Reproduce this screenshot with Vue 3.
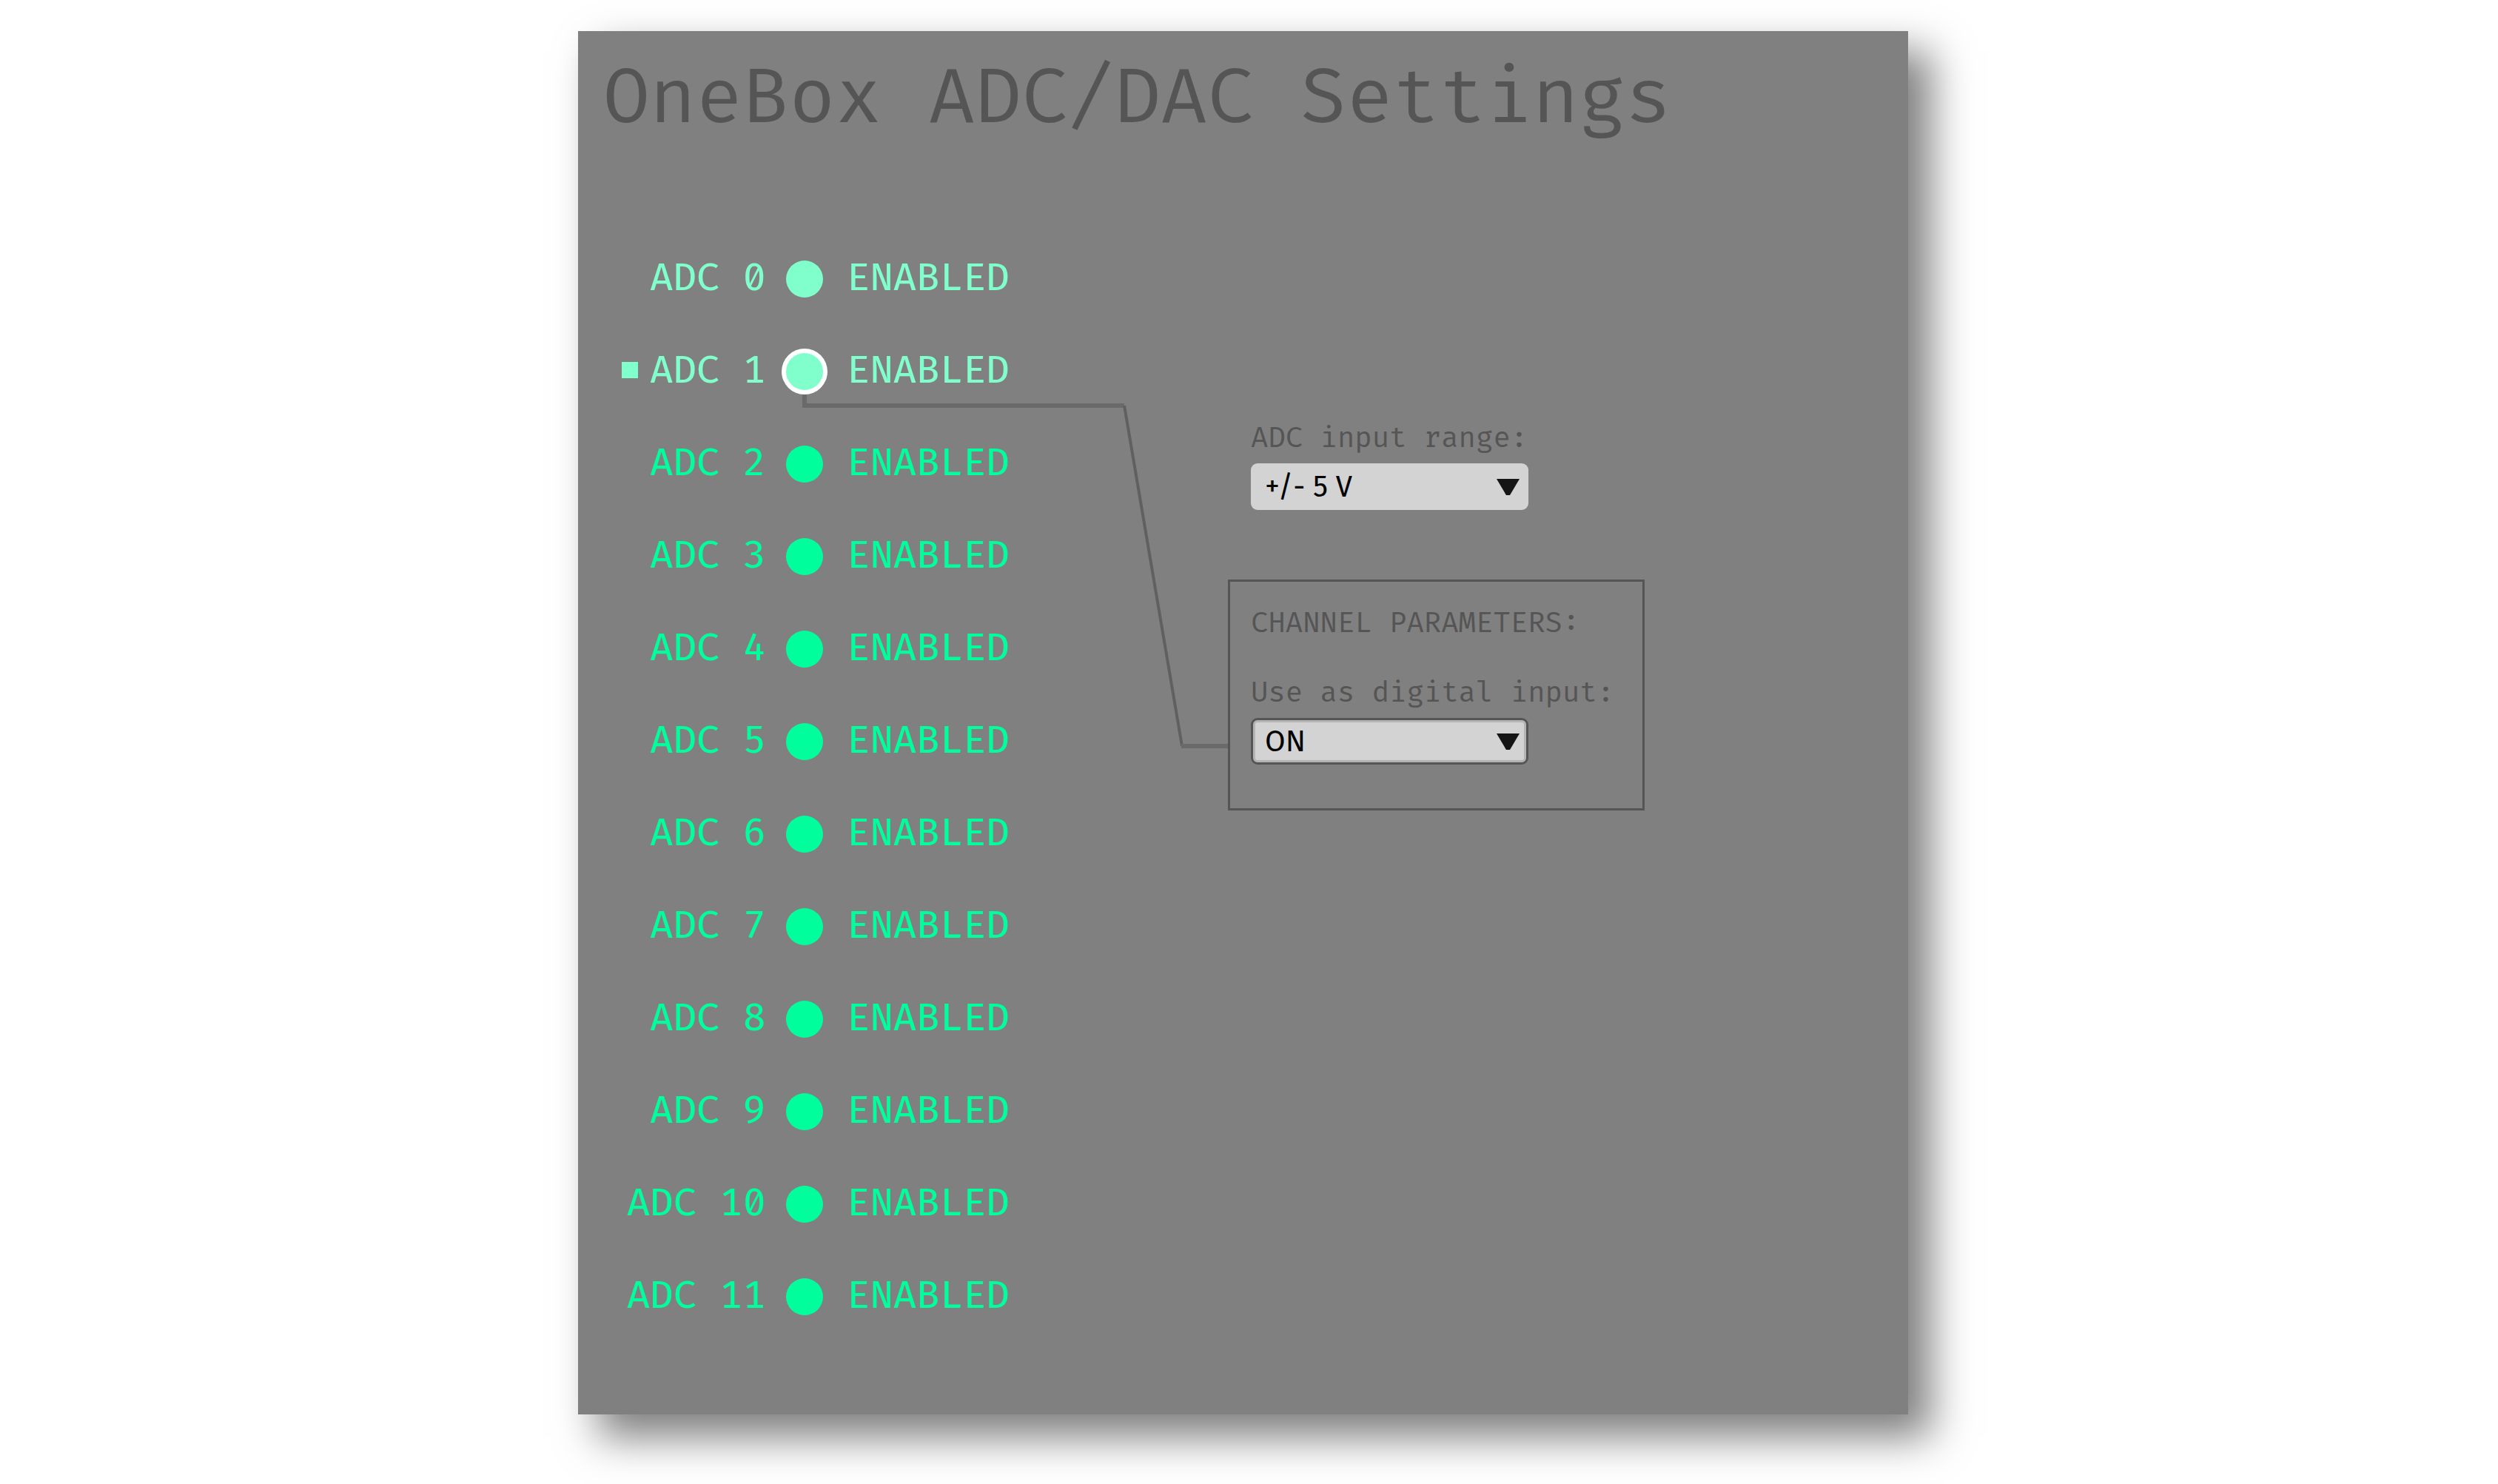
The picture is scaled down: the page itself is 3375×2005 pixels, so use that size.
<script setup>
import { reactive, ref, computed } from 'vue'

const channels = reactive(
  Array.from({ length: 12 }, (_, id) => ({
    id,
    status: 'ENABLED',
    digital: id < 2 ? 'ON' : 'OFF',
  })),
)

const selectedId = ref(1)
const inputRange = ref('+/- 5 V')
const selected = computed(() => channels[selectedId.value])

const ROW = 125
const anchorY = computed(() => selectedId.value * ROW + 94)
const lineTop = computed(() => selectedId.value * ROW + 109)
</script>

<template>
  <div class="page">
    <main class="panel">
      <h1>OneBox ADC/DAC Settings</h1>

      <div class="body">
        <svg class="connector" width="878" height="1500" aria-hidden="true">
          <path class="flat" :d="`M306 ${anchorY}V${lineTop}H738`" />
          <path class="slant" :d="`M738 ${lineTop}L816 694`" />
          <path class="flat" d="M815 694H878" />
        </svg>

        <ul class="channels">
          <li v-for="ch in channels" :key="ch.id">
            <button
              type="button"
              class="channel"
              :class="{ digital: ch.digital === 'ON', selected: ch.id === selectedId }"
              @click="selectedId = ch.id"
            >
              <span v-if="ch.id === selectedId" class="marker"></span>
              <span class="name">ADC {{ ch.id }}</span>
              <span class="dot"></span>
              <span class="status">{{ ch.status }}</span>
            </button>
          </li>
        </ul>

        <div class="settings">
          <div class="field">
            <label for="range">ADC input range:</label>
            <div class="picker">
              <select id="range" v-model="inputRange">
                <option>+/- 2.5 V</option>
                <option>+/- 5 V</option>
                <option>+/- 10 V</option>
              </select>
              <svg class="arrow" viewBox="0 0 31 22" aria-hidden="true">
                <path d="M0 0H31L18 22H13Z" />
              </svg>
            </div>
          </div>

          <section class="parameters">
            <h2>CHANNEL PARAMETERS:</h2>
            <div class="field">
              <label for="digital">Use as digital input:</label>
              <div class="picker">
                <select id="digital" v-model="selected.digital" class="outlined">
                  <option>ON</option>
                  <option>OFF</option>
                </select>
                <svg class="arrow" viewBox="0 0 31 22" aria-hidden="true">
                  <path d="M0 0H31L18 22H13Z" />
                </svg>
              </div>
            </div>
          </section>
        </div>
      </div>
    </main>
  </div>
</template>

<style>
body {
  margin: 0;
  background: #fff;
}
</style>

<style scoped>
* {
  box-sizing: border-box;
}

.page {
  display: grid;
  grid-template-columns: 781fr minmax(1500px, 1797fr) 797fr;
  padding: 42px 0 94px;
  font-family: 'Fira Code', 'Fira Mono', 'DejaVu Sans Mono', monospace;
  color: #555;
}

.panel {
  grid-column: 2;
  padding-bottom: 97px;
  background: #808080;
  box-shadow: 29px 29px 52px 2px rgba(0, 0, 0, 0.5);
}

h1 {
  margin: 0;
  padding: 12px 34px 100px;
  font-size: 102px;
  line-height: 160px;
  font-weight: 400;
}

.body {
  position: relative;
  display: flex;
}

.connector {
  position: absolute;
  top: 0;
  left: 0;
  fill: none;
  pointer-events: none;
}

.flat {
  stroke: #6a6a6a;
  stroke-width: 6px;
}

.slant {
  stroke: #606060;
  stroke-width: 4px;
}

.channels {
  flex: 0 0 878px;
  margin: 0;
  padding: 0 0 0 59px;
  list-style: none;
}

.channel {
  position: relative;
  display: grid;
  grid-template-columns: 195px 62px auto;
  column-gap: 21px;
  align-items: center;
  height: 125px;
  padding: 0;
  border: 0;
  background: none;
  color: #00ff9c;
  font: inherit;
  font-size: 51px;
  font-weight: 450;
  line-height: 60px;
  white-space: nowrap;
  cursor: pointer;
}

.channel.digital {
  color: #80ffcc;
}

.name {
  text-align: right;
}

.status {
  padding-left: 5px;
}

.dot {
  justify-self: center;
  width: 50px;
  height: 50px;
  border-radius: 50%;
  background: currentColor;
}

.selected .dot {
  box-shadow: 0 0 0 6px #fff;
}

.marker {
  position: absolute;
  top: 50px;
  left: 0;
  width: 22px;
  height: 22px;
  background: currentColor;
}

.settings {
  flex: 0 0 563px;
  padding-top: 255px;
  font-size: 38px;
  line-height: 48px;
}

.field {
  display: flex;
  flex-direction: column;
  gap: 9px;
  padding-left: 31px;
}

.parameters {
  margin-top: 94px;
  padding: 33px 0 59px;
  border: 3px solid #555;
}

.parameters .field {
  padding-left: 28px;
}

h2 {
  margin: 0 0 46px;
  padding-left: 28px;
  font-size: 38px;
  font-weight: 400;
}

.picker {
  display: grid;
  width: 375px;
  align-items: center;
}

select {
  grid-area: 1 / 1;
  width: 100%;
  height: 63px;
  margin: 0;
  padding: 0 60px 0 19px;
  appearance: none;
  border: 0;
  border-radius: 9px;
  background: #d3d3d3;
  color: #000;
  font-family: 'Fira Sans', Roboto, sans-serif;
  font-size: 40px;
}

select.outlined {
  padding-left: 16px;
  border: 3px solid #555;
  box-shadow: inset 0 0 0 3px #b4b4b4;
}

.arrow {
  grid-area: 1 / 1;
  justify-self: end;
  width: 31px;
  height: 22px;
  margin-right: 12px;
  fill: #151515;
  pointer-events: none;
}
</style>
